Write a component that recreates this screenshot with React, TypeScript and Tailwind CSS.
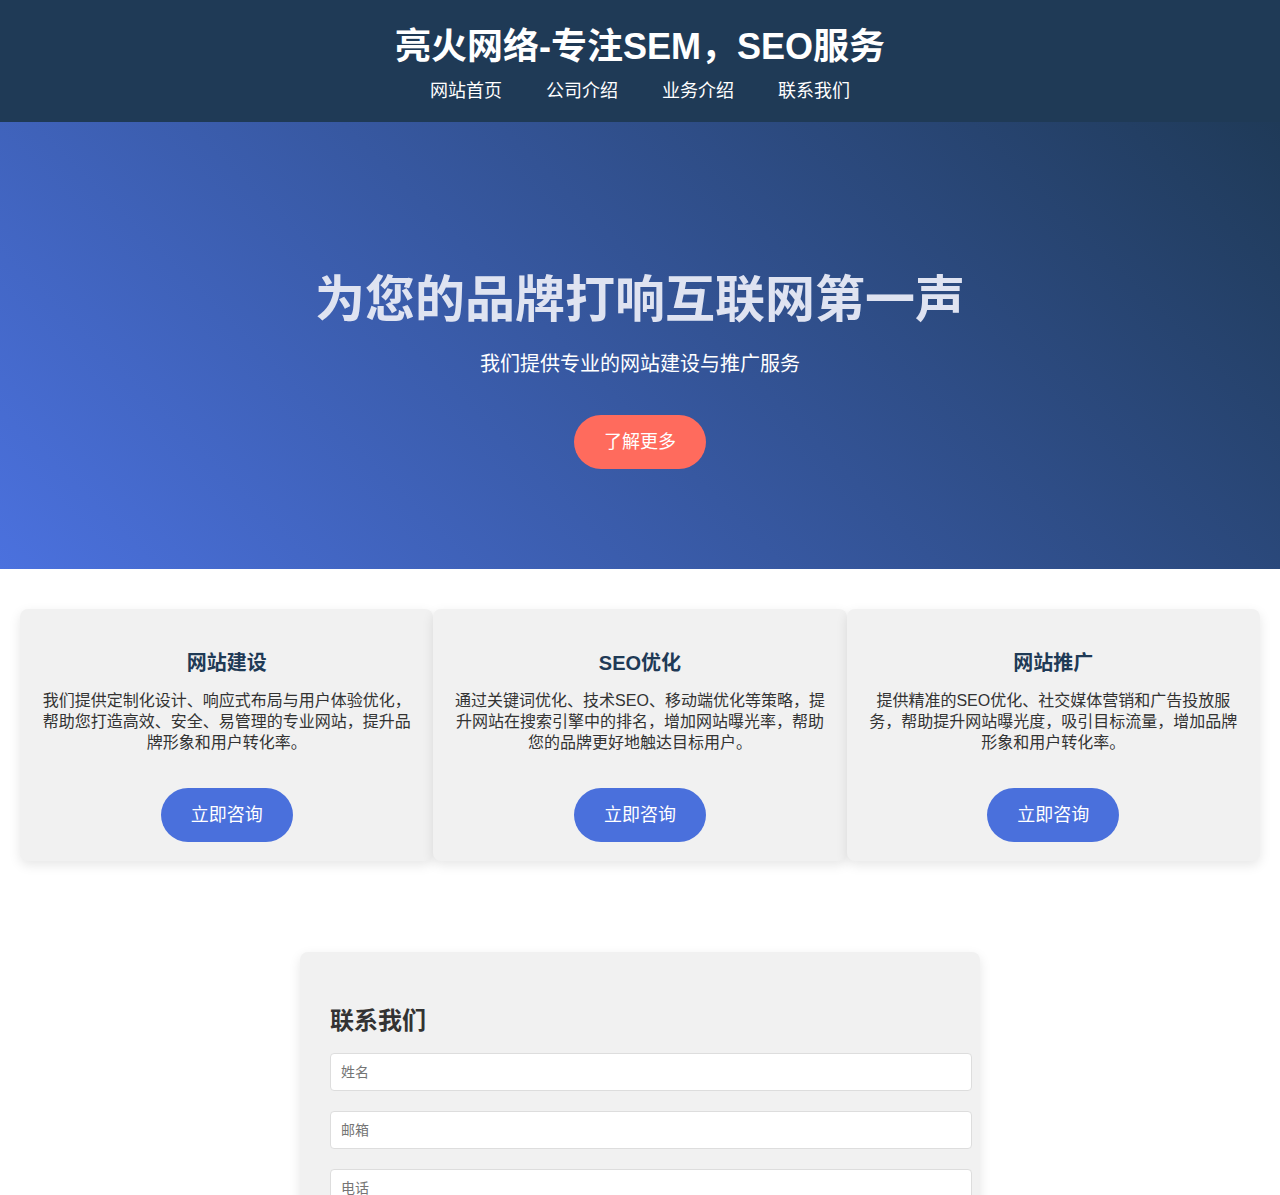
import React from "react";

const font = "font-['Liberation_Sans','Noto_Sans_CJK_SC',sans-serif]";

function ServiceCard({ title, text }: { title: string; text: string }) {
  return (
    <div className="flex flex-col items-center rounded-lg bg-[#f1f1f1] px-5 pt-[39px] pb-[19px] shadow-[0_4px_12px_rgba(0,0,0,0.1)]">
      <h3 className="text-[20px] font-bold leading-[30px] text-[#1f3a56]">{title}</h3>
      <p className="mt-[12px] text-center text-[16px] leading-[21px] text-[#333]">{text}</p>
      <button className="mt-[35px] flex h-[54px] w-[132px] items-center justify-center rounded-full bg-[#4a70dc] text-[18px] text-white">
        立即咨询
      </button>
    </div>
  );
}

export default function App() {
  return (
    <div className={`${font} min-h-screen bg-white`}>
      <header className="flex h-[122px] flex-col items-center bg-[#1f3a56] pt-[25px] text-white">
        <h1 className="text-[36px] font-bold leading-[44px]">亮火网络-专注SEM，SEO服务</h1>
        <nav className="mt-[9px] flex gap-[44px] text-[18px] leading-[27px]">
          <a>网站首页</a>
          <a>公司介绍</a>
          <a>业务介绍</a>
          <a>联系我们</a>
        </nav>
      </header>

      <section className="flex h-[447px] flex-col items-center bg-[linear-gradient(45deg,#4b71de,#1f3a58)] pt-[148px] text-center">
        <h2 className="text-[50px] font-bold leading-[60px] text-[#dfe3f1]">为您的品牌打响互联网第一声</h2>
        <p className="mt-[19px] text-[20px] leading-[30px] text-white">我们提供专业的网站建设与推广服务</p>
        <button className="mt-[36px] flex h-[54px] w-[132px] items-center justify-center rounded-full bg-[#ff6b5d] text-[18px] text-white">
          了解更多
        </button>
      </section>

      <section className="grid grid-cols-3 px-5 pt-10">
        <ServiceCard
          title="网站建设"
          text="我们提供定制化设计、响应式布局与用户体验优化，帮助您打造高效、安全、易管理的专业网站，提升品牌形象和用户转化率。"
        />
        <ServiceCard
          title="SEO优化"
          text="通过关键词优化、技术SEO、移动端优化等策略，提升网站在搜索引擎中的排名，增加网站曝光率，帮助您的品牌更好地触达目标用户。"
        />
        <ServiceCard
          title="网站推广"
          text="提供精准的SEO优化、社交媒体营销和广告投放服务，帮助提升网站曝光度，吸引目标流量，增加品牌形象和用户转化率。"
        />
      </section>

      <section className="flex justify-center pt-[91px] pb-10">
        <div className="w-[680px] rounded-lg bg-[#f1f1f1] px-[30px] pt-[51px] pb-[30px] shadow-[0_4px_12px_rgba(0,0,0,0.1)]">
          <h2 className="text-[24px] font-bold leading-[36px] text-[#333]">联系我们</h2>
          <form className="mt-[14px] flex flex-col gap-5">
            <input
              placeholder="姓名"
              className="h-[38px] w-[642px] rounded border border-[#ddd] bg-white px-[10px] text-[14px] placeholder:text-[#757575]"
            />
            <input
              placeholder="邮箱"
              className="h-[38px] w-[642px] rounded border border-[#ddd] bg-white px-[10px] text-[14px] placeholder:text-[#757575]"
            />
            <input
              placeholder="电话"
              className="h-[38px] w-[642px] rounded border border-[#ddd] bg-white px-[10px] text-[14px] placeholder:text-[#757575]"
            />
            <textarea
              placeholder="留言"
              className="h-[100px] w-[642px] rounded border border-[#ddd] bg-white px-[10px] py-2 text-[14px] placeholder:text-[#757575]"
            />
            <button type="button" className="h-[44px] w-[120px] rounded-full bg-[#4a70dc] text-[16px] text-white">
              提交
            </button>
          </form>
        </div>
      </section>
    </div>
  );
}
